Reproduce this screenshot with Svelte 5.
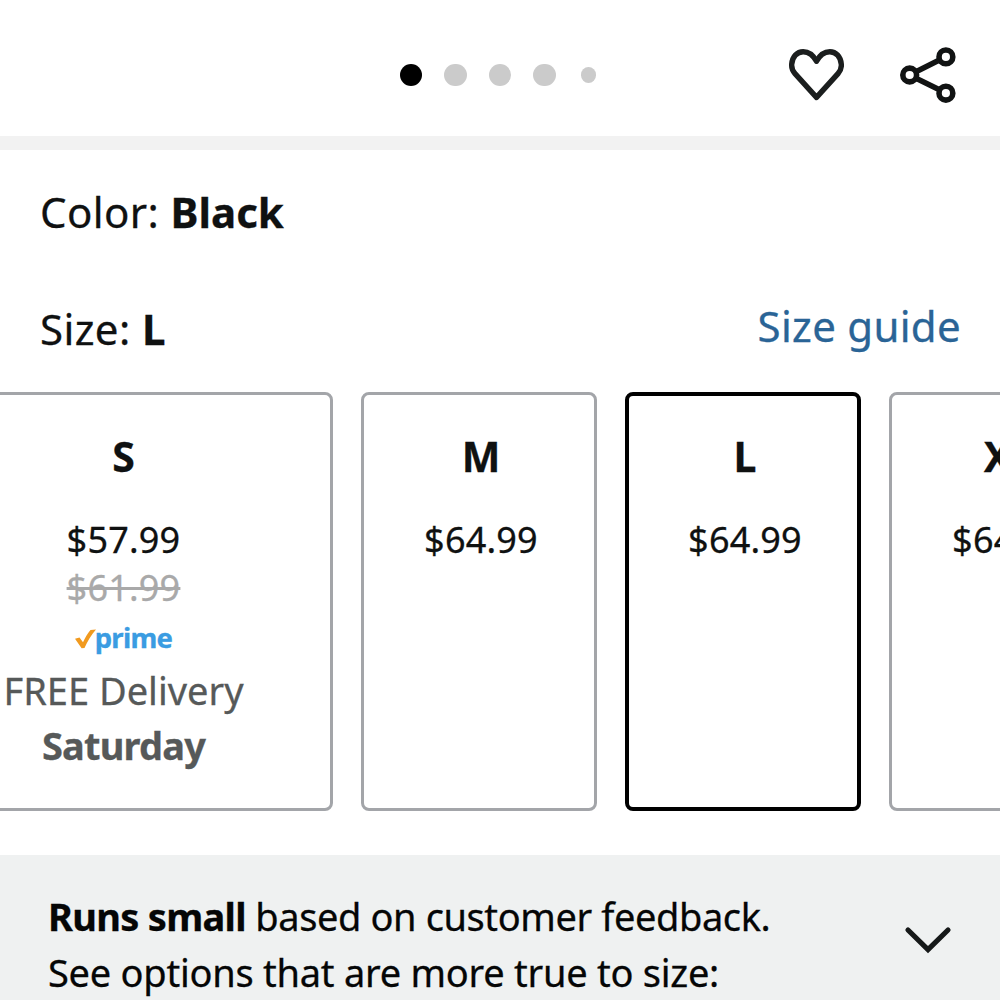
<script>
  const sizes = [
    { label: 'S', price: '$57.99', listPrice: '$61.99', prime: true, wide: true },
    { label: 'M', price: '$64.99' },
    { label: 'L', price: '$64.99' },
    { label: 'XL', price: '$64.99' }
  ];

  const slides = 5;

  let activeSlide = $state(0);
  let selected = $state('L');
</script>

<main class="product">
  <header class="gallery-bar">
    <div class="dots" aria-label="Product images">
      {#each Array(slides) as _, i}
        <button
          class="dot"
          class:active={i === activeSlide}
          class:small={i === slides - 1}
          aria-label="Image {i + 1}"
          onclick={() => (activeSlide = i)}
        ></button>
      {/each}
    </div>
    <div class="actions">
      <svg width="56" height="56" viewBox="0 0 56 56" fill="none" aria-label="Save">
        <path
          d="M28.500 50.400 7 26.600C4.200 23.400 3.400 20.600 3.700 17.200 4.300 9.700 9 4.700 15.200 4.700c6 0 9.800 3 13.300 9.600 3.500-6.600 7.300-9.600 13.300-9.600 6.200 0 10.900 5 11.500 12.500.3 3.400-.5 6.200-3.300 9.400Z"
          stroke="#1b1e1e"
          stroke-width="5.400"
          stroke-linejoin="round"
        />
      </svg>
      <svg width="56" height="56" viewBox="0 0 56 56" fill="none" overflow="visible" aria-label="Share">
        <g stroke="#111313" stroke-width="5.600">
          <circle cx="9.700" cy="28" r="6.900" />
          <circle cx="45.900" cy="9.900" r="6.900" />
          <circle cx="45.900" cy="46.200" r="6.900" />
          <path d="m16 24.800 23.400-11.700M16 31.200l23.400 11.600" />
        </g>
      </svg>
    </div>
  </header>

  <section class="options">
    <p class="row">Color: <strong>Black</strong></p>
    <div class="row size-row">
      <p>Size: <strong>{selected}</strong></p>
      <a class="guide" href="#guide">Size guide</a>
    </div>

    <div class="cards">
      {#each sizes as size (size.label)}
        <button
          class="card"
          class:wide={size.wide}
          class:selected={size.label === selected}
          onclick={() => (selected = size.label)}
        >
          <span class="label">{size.label}</span>
          <span class="price">{size.price}</span>
          {#if size.listPrice}
            <span class="price list-price">{size.listPrice}</span>
          {/if}
          {#if size.prime}
            <span class="prime">
              <svg width="21" height="21" viewBox="0 0 21 21" fill="none" aria-hidden="true">
                <path
                  d="M0 9.800 4.500 8.400 8 13.200C10 8.700 12.500 4.200 15.500.9L21 .6C16.200 6 12.500 12.500 9.500 19L6.600 19.300Z"
                  fill="#f19a1f"
                />
              </svg>
              <span>prime</span>
            </span>
            <span class="delivery">FREE Delivery</span>
            <span class="delivery day">Saturday</span>
          {/if}
        </button>
      {/each}
    </div>
  </section>

  <section class="fit-note">
    <div>
      <p class="verdict"><strong>Runs small</strong> based on customer feedback.</p>
      <p>See options that are more true to size:</p>
    </div>
    <svg width="48" height="28" viewBox="0 0 48 28" fill="none" aria-hidden="true">
      <path d="m4 4 20 19.500L44 4" stroke="#161919" stroke-width="5.200" stroke-linecap="round" />
    </svg>
  </section>
</main>

<style>
  :global(body) {
    margin: 0;
    overflow: hidden;
  }

  .product {
    width: 1000px;
    height: 1000px;
    overflow: hidden;
    background: #fff;
    color: #0f1111;
    font-family: 'Noto Sans', 'Open Sans', sans-serif;
    -webkit-text-stroke: 0.3px currentColor;
  }
  p {
    margin: 0;
  }
  button {
    font: inherit;
    color: inherit;
    padding: 0;
    border: none;
    cursor: pointer;
  }

  .gallery-bar {
    display: grid;
    grid-template-columns: 1fr auto 1fr;
    align-items: center;
    height: 136px;
    padding: 14px 44px 0 40px;
    box-sizing: border-box;
  }
  .dots {
    grid-column: 2;
    display: flex;
    align-items: center;
    gap: 22px;
  }
  .dot {
    width: 22.5px;
    height: 22.5px;
    border-radius: 50%;
    background: #cbcbcb;
  }
  .dot.active {
    background: #000;
  }
  .dot.small {
    width: 15.5px;
    height: 15.5px;
    margin-left: 3px;
  }
  .actions {
    display: flex;
    justify-content: flex-end;
    gap: 56px;
  }

  .options {
    border-top: 14px solid #f2f2f2;
    padding-top: 34px;
  }
  .row {
    padding: 0 39px 0 40px;
    font-size: 42px;
    line-height: 56px;
    letter-spacing: 0.4px;
    white-space: nowrap;
  }
  .row strong {
    letter-spacing: 0;
  }
  .size-row {
    display: flex;
    justify-content: space-between;
    margin-top: 61px;
  }
  .guide {
    line-height: 50px;
    letter-spacing: 0.3px;
    color: #2a6496;
    text-decoration: none;
  }

  .cards {
    display: flex;
    gap: 28px;
    margin: 35px 0 0 -86px;
  }
  .card {
    display: flex;
    flex: none;
    flex-direction: column;
    align-items: center;
    width: 236px;
    height: 419px;
    padding: 33px 0 0 4px;
    box-sizing: border-box;
    border: 3px solid #a3a5a9;
    border-radius: 8px;
    background: #fff;
  }
  .card.wide {
    width: 419px;
    padding-left: 0;
  }
  .card.selected {
    border: 4px solid #000;
    padding-top: 32px;
  }
  .label {
    margin-bottom: 32px;
    font-size: 41px;
    font-weight: 700;
    line-height: 56px;
  }
  .price {
    font-size: 36px;
    line-height: 48px;
    letter-spacing: 0.2px;
  }
  .list-price {
    color: #a9a9a9;
    text-decoration: line-through;
  }
  .prime {
    display: flex;
    align-items: center;
    height: 51px;
    font-size: 27.5px;
    font-weight: 700;
    letter-spacing: -0.7px;
    color: #3a9ce2;
  }
  .prime svg {
    margin: 4px -1px 0 0;
  }
  .delivery {
    font-size: 38px;
    line-height: 55px;
    color: #565959;
  }
  .day {
    font-weight: 700;
    letter-spacing: -0.8px;
  }

  .fit-note {
    display: flex;
    justify-content: space-between;
    height: 145px;
    margin-top: 44px;
    padding: 34px 48px 0;
    box-sizing: border-box;
    background: #eff1f1;
    color: #050606;
    font-size: 38px;
    line-height: 55.5px;
    letter-spacing: -0.25px;
    white-space: nowrap;
  }
  .verdict {
    letter-spacing: -0.4px;
  }
  .verdict strong {
    letter-spacing: -0.7px;
  }
  .fit-note svg {
    margin-top: 37px;
  }
</style>
